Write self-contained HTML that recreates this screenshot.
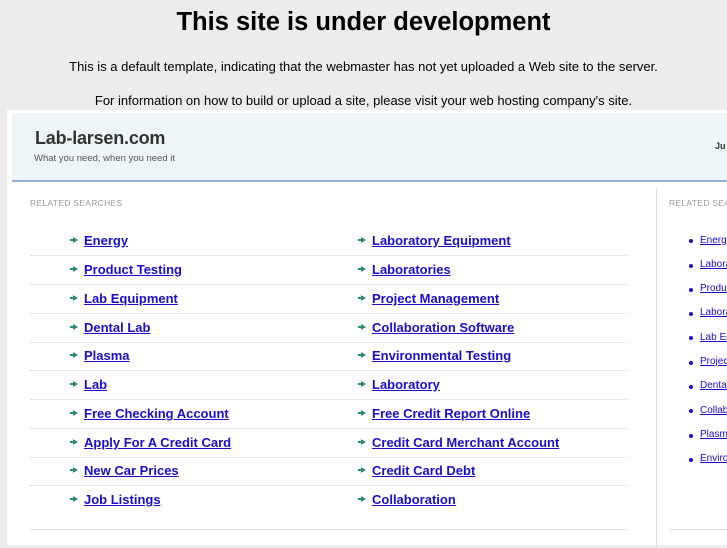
<!DOCTYPE html>
<html><head><style>
body{margin:0;width:727px;height:545px;overflow:hidden;background:#ececec;font-family:"Liberation Sans",sans-serif;position:relative}
.t{position:absolute;left:0;width:727px;text-align:center;color:#000}
.frame{position:absolute;left:7px;top:110px;width:720px;height:435px;background:#fff}
.hdr{position:absolute;left:12px;top:113px;width:715px;height:67px;background:#eef5f7;border-bottom:2px solid #8fb0e6}
.a{position:absolute;font-family:"Liberation Sans",sans-serif;white-space:nowrap}
.row{position:absolute;left:30px;width:598px;height:29px;border-bottom:1px dotted #c8d6e8}
.row a{position:absolute;top:7px;font:bold 13px "Liberation Sans",sans-serif;color:#1a0dcc;text-decoration:underline;white-space:nowrap}
.ar{position:absolute;top:11px;width:0;height:0;border-left:5px solid #2a8a7a;border-top:3px solid transparent;border-bottom:3px solid transparent}
.ar:before{content:"";position:absolute;left:-8px;top:-1px;width:4px;height:2px;background:#2a8a7a}
.r{position:absolute;left:0;top:0;width:727px;height:545px;overflow:hidden}
.r a{position:absolute;left:700px;font:10px "Liberation Sans",sans-serif;color:#1a0dcc;text-decoration:underline;white-space:nowrap}
.r i{position:absolute;left:689px;width:4px;height:4px;border-radius:50%;background:#1a0dcc}
</style></head><body>
<div class="t" style="top:8px;font-weight:bold;font-size:25.5px">This site is under development</div>
<div class="t" style="top:59px;font-size:13px">This is a default template, indicating that the webmaster has not yet uploaded a Web site to the server.</div>
<div class="t" style="top:93px;font-size:13px">For information on how to build or upload a site, please visit your web hosting company's site.</div>
<div class="frame"></div>
<div class="hdr"></div>
<div class="a" style="left:35px;top:128px;font-size:18px;font-weight:bold;color:#333;letter-spacing:-0.2px">Lab-larsen.com</div>
<div class="a" style="left:34px;top:153px;font-size:9.5px;color:#555">What you need, when you need it</div>
<div class="a" style="left:715px;top:141px;font-size:9px;font-weight:bold;color:#333">Ju</div>
<div class="a" style="left:30px;top:198px;font-size:8.5px;color:#999;letter-spacing:.3px">RELATED SEARCHES</div>
<div style="position:absolute;left:656px;top:188px;width:1px;height:360px;background:#d0ddf0"></div>
<div style="position:absolute;left:30px;top:529px;width:598px;height:1px;background:#d0ddf0"></div>
<div style="position:absolute;left:669px;top:529px;width:58px;height:1px;background:#d0ddf0"></div>
<div class="row" style="top:226px"><span class="ar" style="left:43px"></span><a style="left:54px">Energy</a><span class="ar" style="left:331px"></span><a style="left:342px">Laboratory Equipment</a></div>
<div class="row" style="top:255px"><span class="ar" style="left:43px"></span><a style="left:54px">Product Testing</a><span class="ar" style="left:331px"></span><a style="left:342px">Laboratories</a></div>
<div class="row" style="top:284px"><span class="ar" style="left:43px"></span><a style="left:54px">Lab Equipment</a><span class="ar" style="left:331px"></span><a style="left:342px">Project Management</a></div>
<div class="row" style="top:313px"><span class="ar" style="left:43px"></span><a style="left:54px">Dental Lab</a><span class="ar" style="left:331px"></span><a style="left:342px">Collaboration Software</a></div>
<div class="row" style="top:341px"><span class="ar" style="left:43px"></span><a style="left:54px">Plasma</a><span class="ar" style="left:331px"></span><a style="left:342px">Environmental Testing</a></div>
<div class="row" style="top:370px"><span class="ar" style="left:43px"></span><a style="left:54px">Lab</a><span class="ar" style="left:331px"></span><a style="left:342px">Laboratory</a></div>
<div class="row" style="top:399px"><span class="ar" style="left:43px"></span><a style="left:54px">Free Checking Account</a><span class="ar" style="left:331px"></span><a style="left:342px">Free Credit Report Online</a></div>
<div class="row" style="top:428px"><span class="ar" style="left:43px"></span><a style="left:54px">Apply For A Credit Card</a><span class="ar" style="left:331px"></span><a style="left:342px">Credit Card Merchant Account</a></div>
<div class="row" style="top:456px"><span class="ar" style="left:43px"></span><a style="left:54px">New Car Prices</a><span class="ar" style="left:331px"></span><a style="left:342px">Credit Card Debt</a></div>
<div class="row" style="top:485px;border-bottom:none"><span class="ar" style="left:43px"></span><a style="left:54px">Job Listings</a><span class="ar" style="left:331px"></span><a style="left:342px">Collaboration</a></div>
<div class="r">
<div class="a" style="left:669px;top:198px;font-size:8.5px;color:#999;letter-spacing:.3px">RELATED SEARCHES</div>
<i style="top:239px"></i><a style="top:235px">Energy</a>
<i style="top:264px"></i><a style="top:259px">Laboratory</a>
<i style="top:288px"></i><a style="top:283px">Product</a>
<i style="top:312px"></i><a style="top:307px">Laboratory</a>
<i style="top:336px"></i><a style="top:332px">Lab Equipment</a>
<i style="top:361px"></i><a style="top:356px">Project</a>
<i style="top:385px"></i><a style="top:380px">Dental</a>
<i style="top:409px"></i><a style="top:405px">Collaboration</a>
<i style="top:434px"></i><a style="top:429px">Plasma</a>
<i style="top:458px"></i><a style="top:453px">Environmental</a>
</div>
</body></html>
